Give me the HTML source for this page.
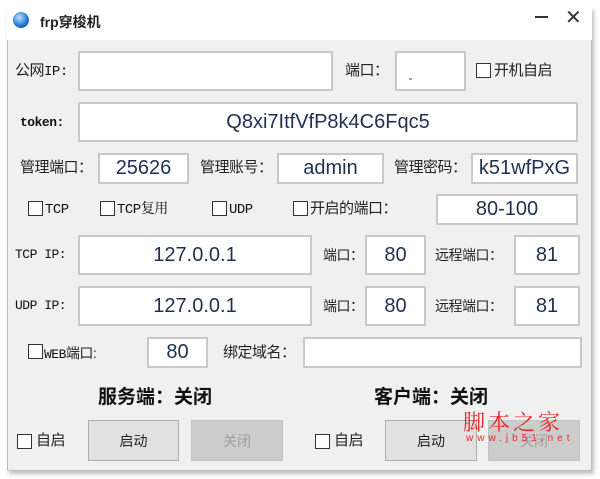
<!DOCTYPE html>
<html><head><meta charset="utf-8"><style>
*{margin:0;padding:0;box-sizing:border-box}
body{width:600px;height:479px;background:#fff;position:relative;overflow:hidden;font-family:"Liberation Sans","Noto Sans CJK SC",sans-serif;}
.win{position:absolute;left:7px;top:7px;width:585px;height:464px;background:#f0f0f0;border:1px solid #bdbdbd;box-shadow:2px 3px 4px rgba(0,0,0,.25)}
.title{position:absolute;left:7px;top:7px;width:585px;height:33px;background:#fff}
.a{position:absolute}
.in{position:absolute;background:#fff;border:2px solid #c8c8c8;color:#1f3050;font-size:20px;text-align:center;display:flex;align-items:center;justify-content:center}
.lb{position:absolute;font-size:15px;color:#222;line-height:16px;white-space:nowrap;letter-spacing:-0.5px}
.sf{font-family:"Liberation Mono","Noto Serif CJK SC",monospace;font-size:13px;letter-spacing:-0.5px;color:#111}
.cb{position:absolute;width:15px;height:15px;border:1.5px solid #333;background:#fff}
.btn{position:absolute;background:#e1e1e1;border:1px solid #adadad;font-size:14px;color:#222;display:flex;align-items:center;justify-content:center}
.dis{background:#cccccc;border-color:#c4c4c4;color:#a0a0a0}
.st{position:absolute;font-size:19px;font-weight:bold;color:#111;white-space:nowrap}
</style></head><body>
<div class="win"></div>
<div class="title"></div>
<div class="a" style="left:13px;top:12px;width:16px;height:16px;border-radius:50%;background:radial-gradient(circle at 40% 35%,#bfe3ff,#2a7bd0 55%,#0b3d7a)"></div>
<div class="a" style="left:40px;top:12px;font-size:14px;font-weight:bold;color:#222">frp穿梭机</div>
<div class="a" style="left:535px;top:16px;width:13px;height:1.5px;background:#333"></div>
<div class="a" style="left:565px;top:5px;font-size:20px;color:#333">✕</div>

<div class="lb" style="left:15px;top:63px"><span style="font-size:15px">公网</span><span class="sf" style="font-size:14px">IP:</span></div>
<div class="in" style="left:78px;top:51px;width:255px;height:40px"></div>
<div class="lb" style="left:345px;top:63px">端口：</div>
<div class="in" style="left:395px;top:51px;width:71px;height:40px"><span style="font-size:12px;margin:14px 40px 0 0">-</span></div>
<div class="cb" style="left:476px;top:63px"></div>
<div class="lb" style="left:494px;top:63px;font-size:15px">开机自启</div>

<div class="lb sf" style="left:20px;top:115px;font-weight:bold">token:</div>
<div class="in" style="left:78px;top:102px;width:500px;height:40px">Q8xi7ItfVfP8k4C6Fqc5</div>

<div class="lb" style="left:20px;top:160px">管理端口：</div>
<div class="in" style="left:98px;top:153px;width:91px;height:31px">25626</div>
<div class="lb" style="left:200px;top:160px">管理账号：</div>
<div class="in" style="left:277px;top:153px;width:107px;height:31px">admin</div>
<div class="lb" style="left:394px;top:160px">管理密码：</div>
<div class="in" style="left:471px;top:153px;width:107px;height:31px">k51wfPxG</div>

<div class="cb" style="left:28px;top:201px"></div><div class="lb sf" style="left:45px;top:202px;font-size:14px">TCP</div>
<div class="cb" style="left:100px;top:201px"></div><div class="lb sf" style="left:117px;top:202px;font-size:14px">TCP复用</div>
<div class="cb" style="left:212px;top:201px"></div><div class="lb sf" style="left:229px;top:202px;font-size:14px">UDP</div>
<div class="cb" style="left:293px;top:201px"></div><div class="lb" style="left:310px;top:201px">开启的端口：</div>
<div class="in" style="left:436px;top:194px;width:142px;height:31px">80-100</div>

<div class="lb sf" style="left:15px;top:247px">TCP IP:</div>
<div class="in" style="left:78px;top:235px;width:234px;height:40px">127.0.0.1</div>
<div class="lb" style="left:323px;top:247px;font-size:14px">端口：</div>
<div class="in" style="left:365px;top:235px;width:61px;height:40px">80</div>
<div class="lb" style="left:435px;top:247px;font-size:14px">远程端口：</div>
<div class="in" style="left:514px;top:235px;width:66px;height:40px">81</div>

<div class="lb sf" style="left:15px;top:298px">UDP IP:</div>
<div class="in" style="left:78px;top:286px;width:234px;height:40px">127.0.0.1</div>
<div class="lb" style="left:323px;top:298px;font-size:14px">端口：</div>
<div class="in" style="left:365px;top:286px;width:61px;height:40px">80</div>
<div class="lb" style="left:435px;top:298px;font-size:14px">远程端口：</div>
<div class="in" style="left:514px;top:286px;width:66px;height:40px">81</div>

<div class="cb" style="left:28px;top:344px"></div><div class="lb" style="left:44px;top:345px;font-size:14px"><span class="sf">WEB</span>端口:</div>
<div class="in" style="left:147px;top:337px;width:61px;height:31px">80</div>
<div class="lb" style="left:223px;top:345px">绑定域名：</div>
<div class="in" style="left:303px;top:337px;width:279px;height:31px"></div>

<div class="st" style="left:98px;top:382px">服务端：关闭</div>
<div class="st" style="left:374px;top:382px">客户端：关闭</div>

<div class="cb" style="left:17px;top:434px"></div><div class="lb" style="left:36px;top:433px">自启</div>
<div class="btn" style="left:88px;top:420px;width:91px;height:41px">启动</div>
<div class="btn dis" style="left:191px;top:420px;width:92px;height:41px">关闭</div>
<div class="cb" style="left:315px;top:434px"></div><div class="lb" style="left:334px;top:433px">自启</div>
<div class="btn" style="left:385px;top:420px;width:92px;height:41px">启动</div>
<div class="btn dis" style="left:488px;top:420px;width:92px;height:41px">关闭</div>

<div class="a" style="left:463px;top:406px;font-size:22px;color:#e8282b;font-family:'Noto Serif CJK SC',serif;letter-spacing:3px;white-space:nowrap">脚本之家</div>
<div class="a" style="left:466px;top:433px;font-size:10px;color:#e8282b;letter-spacing:4px;white-space:nowrap">www.jb51.net</div>
</body></html>
